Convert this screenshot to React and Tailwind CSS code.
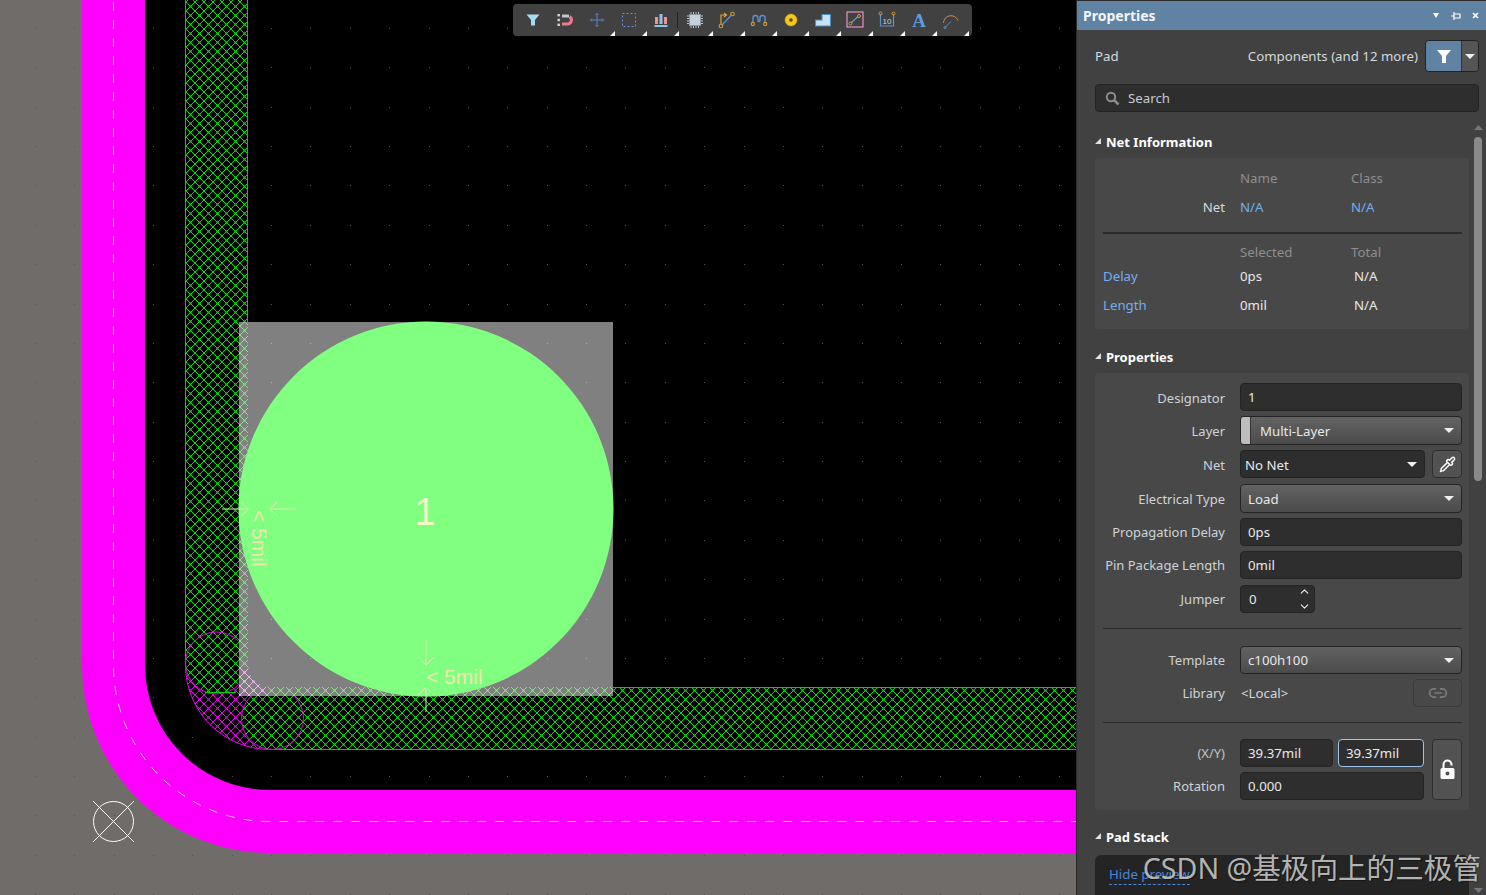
import React from "react";
import { Pipette, Link2, ChevronUp, ChevronDown } from "lucide-react";

const FONT = "font-['Noto_Sans','Open_Sans',sans-serif]";

function Canvas() {
  const dots = [];
  for (let i = -3; i < 24; i++) {
    for (let j = 0; j < 23; j++) {
      const x = Math.round(153 + i * 39.37);
      const y = Math.round(28 + j * 39.37);
      if (x > 0 && x < 1076) dots.push([x, y]);
    }
  }
  const hatch = (id, color, bg) => (
    <pattern id={id} width="9" height="9" patternUnits="userSpaceOnUse" x="186" y="2">
      {bg && <rect width="9" height="9" fill={bg} />}
      <path d="M0,0 L9,9 M9,0 L0,9" stroke={color} strokeWidth="1" fill="none" shapeRendering="crispEdges" />
      <rect x="3.5" y="3.5" width="2" height="2" fill={color} />
      <rect x="-1" y="-1" width="2" height="2" fill={color} />
      <rect x="8" y="-1" width="2" height="2" fill={color} />
      <rect x="-1" y="8" width="2" height="2" fill={color} />
      <rect x="8" y="8" width="2" height="2" fill={color} />
    </pattern>
  );
  const padBand = "M239,322 H248 V665 A22,22 0 0 0 270,687 H613 V696 H239 Z";
  return (
    <svg className="block" width="1076" height="895" viewBox="0 0 1076 895">
      <defs>
        {hatch("g", "#00e600", "#000")}
        {hatch("m", "#f000f0", "#000")}
        {hatch("pg", "#8fdc8f")}
        {hatch("pm", "#f0b4f0")}
      </defs>
      <rect width="1076" height="895" fill="#6f6c69" />
      <path d="M113.5,0 V665 A156.5,156.5 0 0 0 270,821.5 H1076 V0 Z" fill="#000" />
      {dots.map(([x, y], i) => (
        <rect key={i} x={x} y={y} width="1" height="1" fill="#555" />
      ))}
      <path d="M113.5,0 V665 A156.5,156.5 0 0 0 270,821.5 H1076" fill="none" stroke="#ff00ff" strokeWidth="63" />
      <path d="M113.5,2 V665 A156.5,156.5 0 0 0 270,821.5 H1076" fill="none" stroke="#ecc8ec" strokeWidth="1" strokeDasharray="9 9" />
      <circle cx="113.5" cy="821.5" r="20" fill="none" stroke="#fff" strokeWidth="1" />
      <path d="M93,801 L134,842 M134,801 L93,842" stroke="#fff" strokeWidth="1" />

      <path d="M185.5,660 V665 A84.5,84.5 0 0 0 270,749.5 H285 L285,687 H240 V660 Z" fill="url(#m)" stroke="none" />
      <path d="M185.5,665 A84.5,84.5 0 0 0 270,749.5" fill="none" stroke="#f000f0" strokeWidth="1" />
      <rect x="185.5" y="-2" width="62" height="665" fill="url(#g)" stroke="#00d000" strokeWidth="1" />
      <path d="M270,687.5 H1080 V749.5 H270 Z" fill="url(#g)" stroke="#00d000" strokeWidth="1" />
      <circle cx="216.5" cy="663" r="31" fill="url(#g)" stroke="#f000f0" strokeWidth="1" />
      <path d="M205,692.5 H236" fill="none" stroke="#00d000" strokeWidth="1" />
      <circle cx="272.5" cy="718.5" r="31" fill="url(#g)" stroke="#f000f0" strokeWidth="1" />

      <rect x="239" y="322" width="374" height="374" fill="#808080" />
      {dots
        .filter(([x, y]) => x > 248 && x < 613 && y > 322 && y < 687)
        .map(([x, y], i) => (
          <rect key={i} x={x} y={y} width="1" height="1" fill="#b0b0b0" />
        ))}
      <path d={padBand} fill="url(#pg)" />
      <path d="M239,668 H248 A22,22 0 0 0 266,687 V696 H239 Z" fill="url(#pm)" />
      <circle cx="426" cy="509" r="187.5" fill="#80ff80" />

      <g fill="none" stroke="#dcedb0" strokeWidth="1">
        <path d="M222,509 H248 M241,501.5 L248.5,509 L241,516.5" />
        <path d="M296,509 H270 M277.5,501.5 L270,509 L277.5,516.5" />
        <path d="M426,640 V665 M418,657 L426,665 L434,657" />
        <path d="M426,712 V687 M418,695 L426,687 L434,695" />
      </g>
      <text x="425" y="525" textAnchor="middle" fill="#f2f6c4" fontFamily="Liberation Sans" fontSize="38">1</text>
      <text x="426" y="684" fill="#efe6b0" fontFamily="Liberation Sans" fontSize="21">&lt; 5mil</text>
      <text transform="translate(252,510) rotate(90)" fill="#efe6b0" fontFamily="Liberation Sans" fontSize="21">&lt; 5mil</text>
    </svg>
  );
}

const ICONS = [
  <path key="a" d="M2.5,3.5 H15.5 L11,9 V14.5 H7 V9 Z" fill="#a6dcef" />,
  <g key="b">
    <path d="M6,13 H11.5 A4,4 0 0 0 13.5,5.6" fill="none" stroke="#e87b8a" strokeWidth="3" />
    <path d="M6,5 H13" fill="none" stroke="#b9c6d4" strokeWidth="3" />
    <rect x="1.5" y="3" width="2.4" height="2.4" fill="#cfd8e0" />
    <rect x="1.5" y="7.8" width="2.4" height="2.4" fill="#cfd8e0" />
    <rect x="1.5" y="12.6" width="2.4" height="2.4" fill="#cfd8e0" />
  </g>,
  <path key="c" d="M9,2.5 V15.5 M2.5,9 H15.5 M7.5,4 L9,2.5 L10.5,4 M7.5,14 L9,15.5 L10.5,14 M4,7.5 L2.5,9 L4,10.5 M14,7.5 L15.5,9 L14,10.5" fill="none" stroke="#5c86c8" strokeWidth="1" />,
  <rect key="d" x="2.5" y="2.5" width="13" height="13" fill="none" stroke="#6f90e0" strokeWidth="1" strokeDasharray="2 2" />,
  <g key="e">
    <rect x="3" y="6" width="3" height="7" fill="#ef8f98" />
    <rect x="7.5" y="3" width="3" height="10" fill="#8fc3e6" />
    <rect x="12" y="6" width="3" height="7" fill="#ef8f98" />
    <rect x="2.5" y="14" width="13" height="2" fill="#8fc3e6" />
  </g>,
  <g key="f">
    <rect x="3.5" y="3.5" width="11" height="11" fill="#c6d2da" stroke="#8b97a0" />
    <path d="M5,1 V3 M7.5,1 V3 M10,1 V3 M12.5,1 V3 M5,15 V17 M7.5,15 V17 M10,15 V17 M12.5,15 V17 M1,5 H3 M1,7.5 H3 M1,10 H3 M1,12.5 H3 M15,5 H17 M15,7.5 H17 M15,10 H17 M15,12.5 H17" stroke="#b6c2ca" strokeWidth="1" />
  </g>,
  <g key="g" fill="none">
    <path d="M3,13 V4 H8 M6,2 L8.5,4 L6,6" stroke="#e6a23c" strokeWidth="1.2" />
    <path d="M4,14 L13,4.5" stroke="#5f8fcc" strokeWidth="1.3" />
    <circle cx="3" cy="15" r="1.8" stroke="#d59a3a" strokeWidth="1.1" />
    <circle cx="14.5" cy="3" r="1.8" stroke="#d59a3a" strokeWidth="1.1" />
  </g>,
  <g key="h" fill="none">
    <path d="M3,11 V7 A2.5,2.5 0 0 1 8,7 V10 A1.3,1.3 0 0 0 10,10 V7 A2.5,2.5 0 0 1 15,7 V11" stroke="#5f8fcc" strokeWidth="1.4" />
    <circle cx="2.8" cy="13" r="1.6" stroke="#d59a3a" strokeWidth="1.1" />
    <circle cx="15.2" cy="13" r="1.6" stroke="#d59a3a" strokeWidth="1.1" />
  </g>,
  <g key="i">
    <circle cx="9" cy="9" r="6" fill="#f2c81e" stroke="#d9a514" strokeWidth="0.6" />
    <circle cx="9" cy="9" r="1.8" fill="#5a4a10" />
  </g>,
  <path key="j" d="M1.5,9 H8 V3.5 H16.5 V15 H1.5 Z" fill="#c6e2f3" stroke="#4d8cc4" strokeWidth="1.1" />,
  <g key="k" fill="none">
    <rect x="1" y="1" width="16" height="15" stroke="#f09ad8" strokeWidth="1.1" />
    <path d="M5,12 L12,5.5" stroke="#6f96cc" strokeWidth="1.2" />
    <circle cx="4.5" cy="12.5" r="1.5" stroke="#d59a3a" />
    <circle cx="13" cy="5" r="1.5" stroke="#d59a3a" />
  </g>,
  <g key="l" fill="none">
    <path d="M2.5,3 V15 H15.5 V3" stroke="#5f8fcc" strokeWidth="1.2" />
    <circle cx="2.5" cy="2.5" r="1.5" stroke="#d59a3a" />
    <circle cx="15.5" cy="2.5" r="1.5" stroke="#d59a3a" />
    <text x="9" y="13" textAnchor="middle" fill="#c8d0d8" fontSize="8" fontFamily="Liberation Sans">10</text>
  </g>,
  <text key="m" x="9" y="15.5" textAnchor="middle" fill="#5c9cdc" fontSize="19" fontWeight="bold" fontFamily="Liberation Serif">A</text>,
  <g key="n" fill="none">
    <path d="M1.5,12 A7.5,7.5 0 0 1 16,9.5" stroke="#d98a4a" strokeWidth="1" />
    <path d="M3.5,16 L9,10.5" stroke="#5f8fcc" strokeWidth="1" />
    <circle cx="3" cy="16.5" r="1" stroke="#5f8fcc" />
  </g>,
];

function ToolButton({ index }) {
  const hasMark = index >= 2;
  return (
    <div className="relative flex h-[32px] w-[32.1px] shrink-0 items-center justify-center">
      <svg width="18" height="18" viewBox="0 0 18 18" className="overflow-visible">{ICONS[index]}</svg>
      {hasMark && (
        <svg className="absolute bottom-0 right-[-2px]" width="5" height="5" viewBox="0 0 5 5">
          <path d="M5,0 V5 H0 Z" fill="#fff" />
        </svg>
      )}
    </div>
  );
}

function Toolbar() {
  return (
    <div className="absolute left-[513px] top-[4px] flex h-[32px] w-[459px] items-center rounded-[4px] bg-[#414141] pl-[4px]">
      {[0, 1, 2, 3, 4].map((i) => <ToolButton key={i} index={i} />)}
      <div className="h-[16px] w-px bg-[#222]" />
      {[5, 6, 7, 8, 9, 10, 11, 12, 13].map((i) => <ToolButton key={i} index={i} />)}
    </div>
  );
}

function Caret({ className = "" }) {
  return (
    <svg className={className} width="10" height="5" viewBox="0 0 10 5">
      <path d="M0,0 H10 L5,5 Z" fill="#f0f0f0" />
    </svg>
  );
}

function Heading({ children, className = "" }) {
  return (
    <div className={`flex h-[16px] items-center gap-[5px] ${className}`}>
      <svg className="relative -top-px" width="6" height="6" viewBox="0 0 6 6"><path d="M6,0 V6 H0 Z" fill="#e0e0e0" /></svg>
      <span className="text-[13px] font-bold leading-none text-white">{children}</span>
    </div>
  );
}

function Input({ children, h = "h-[28px]", pad = "pl-[7px]", edge = "border-[#232323]", className = "" }) {
  return (
    <div className={`flex ${h} items-center rounded-[4px] border ${edge} bg-[#2e2e2e] ${pad} text-[#e8e8e8] ${className}`}>
      {children}
    </div>
  );
}

function Select({ children, h = "h-[29px]", up = false }) {
  return (
    <div className={`flex ${h} items-center justify-between rounded-[4px] border border-[#232323] bg-linear-to-b from-[#636363] to-[#4b4b4b] pl-[7px] pr-[7px] text-[#e8e8e8]`}>
      <span className={up ? "relative top-px" : ""}>{children}</span>
      <Caret />
    </div>
  );
}

function Row({ label, children, className = "", low = false }) {
  return (
    <div className={`grid grid-cols-[122px_222px] gap-x-[15px] ${className}`}>
      <div className={`flex items-center justify-end whitespace-nowrap text-[13px] text-[#cfd3d6] ${low ? "pt-[2px]" : ""}`}>{label}</div>
      {children}
    </div>
  );
}

function Panel() {
  return (
    <aside className={`relative flex h-[895px] w-[410px] shrink-0 flex-col overflow-hidden border-l border-t border-[#2a2a2a] bg-[#414141] text-[13.25px] leading-[13px] ${FONT}`}>
      <header className="flex h-[29px] shrink-0 items-center justify-between bg-[#6082a3] pl-[6px] pr-[7px]">
        <span className="text-[14px] font-bold text-[#f2f5f8]">Properties</span>
        <div className="flex items-center gap-[11px]">
          <svg width="8" height="5" viewBox="0 0 8 5"><path d="M1,0 H7 L4,5 Z" fill="#fff" /></svg>
          <svg width="10" height="8" viewBox="0 0 10 8"><path d="M0,4 H3 M3,2 H9 V6 H3 Z M3,0 V8" stroke="#fff" strokeWidth="1.2" fill="none" /></svg>
          <svg width="7" height="7" viewBox="0 0 7 7"><path d="M1,1 L6,6 M6,1 L1,6" stroke="#fff" strokeWidth="1.6" /></svg>
        </div>
      </header>

      <div className="shrink-0 pl-[18px] pr-[7px]">
        <div className="mt-[10px] flex h-[32px] items-center">
          <span className="text-[#d5d9dc]">Pad</span>
          <span className="ml-auto mr-[7px] text-[#d5d9dc]">Components (and 12 more)</span>
          <div className="flex h-[32px] w-[54px] overflow-hidden rounded-[4px] border border-[#232323]">
            <div className="flex w-[35px] items-center justify-center bg-[#6082a3]">
              <svg width="16" height="16" viewBox="0 0 16 16"><path d="M1,2 H15 L10,8 V15 H6 V8 Z" fill="#fff" /></svg>
            </div>
            <div className="flex flex-1 items-center justify-center border-l border-[#333] bg-[#555]"><Caret /></div>
          </div>
        </div>
        <div className="mt-[12px] flex h-[28px] items-center rounded-[4px] border border-[#232323] bg-[#2e2e2e] pl-[9px]">
          <svg width="15" height="15" viewBox="0 0 15 15" fill="none" stroke="#8d8d8d">
            <circle cx="6" cy="6" r="4.2" strokeWidth="2" />
            <path d="M9.2,9.2 L13.5,13.5" strokeWidth="2.6" />
          </svg>
          <span className="ml-[8px] text-[#c6cbd0]">Search</span>
        </div>
      </div>

      <div className="flex min-h-0 flex-1">
        <div className="ml-[18px] w-[374px] shrink-0 pt-[22px]">
          <Heading>Net Information</Heading>
          <section className="mt-[8px] rounded-[4px] bg-[#484848] pb-[14px] pl-[8px] pr-[7px] pt-[10px]">
            <div className="grid h-[20px] grid-cols-[137px_111px_1fr] items-center text-[#8e8e8e]">
              <span /><span>Name</span><span>Class</span>
            </div>
            <div className="mt-[9px] grid h-[20px] grid-cols-[137px_111px_1fr] items-center text-[#72aef0]">
              <span className="pr-[15px] text-right text-[#d5d9dc]">Net</span><span>N/A</span><span>N/A</span>
            </div>
            <div className="mt-[15px] h-[2px] bg-[#2b2b2b]" />
            <div className="mt-[8px] grid h-[20px] grid-cols-[137px_111px_1fr] items-center text-[#8e8e8e]">
              <span /><span>Selected</span><span>Total</span>
            </div>
            <div className="mt-[4px] grid h-[20px] grid-cols-[137px_111px_1fr] items-center text-[#e8e8e8]">
              <span className="text-[#72aef0]">Delay</span><span>0ps</span><span className="pl-[3px]">N/A</span>
            </div>
            <div className="mt-[9px] grid h-[20px] grid-cols-[137px_111px_1fr] items-center text-[#e8e8e8]">
              <span className="text-[#72aef0]">Length</span><span>0mil</span><span className="pl-[3px]">N/A</span>
            </div>
          </section>

          <Heading className="mt-[20px]">Properties</Heading>
          <section className="mt-[8px] rounded-[4px] bg-[#484848] pb-[10px] pl-[8px] pr-[7px] pt-[10px]">
            <Row label="Designator" low><Input pad="pl-[7px]"><span>1</span></Input></Row>
            <Row label="Layer" className="mt-[5px]" low>
              <div className="flex h-[29px] items-stretch justify-between overflow-hidden rounded-[4px] border border-[#232323] bg-linear-to-b from-[#636363] to-[#4b4b4b] pr-[7px] text-[#e8e8e8]">
                <div className="w-[10px] border-r border-[#333] bg-[#bdbdbd]" />
                <span className="ml-[9px] flex items-center pt-[2px]">Multi-Layer</span>
                <div className="ml-auto flex items-center"><Caret /></div>
              </div>
            </Row>
            <Row label="Net" className="mt-[5px]" low>
              <div className="flex h-[28px] gap-[7px]">
                <Input pad="pl-[4px] pr-[7px]" className="flex-1 justify-between"><span className="relative top-px">No Net</span><Caret /></Input>
                <div className="flex w-[30px] items-center justify-center rounded-[4px] border border-[#2e2e2e] bg-[#525252]">
                  <Pipette size={17} className="text-white" />
                </div>
              </div>
            </Row>
            <Row label="Electrical Type" className="mt-[6px]" low><Select up>Load</Select></Row>
            <Row label="Propagation Delay" className="mt-[5px]"><Input>0ps</Input></Row>
            <Row label="Pin Package Length" className="mt-[5px]"><Input>0mil</Input></Row>
            <Row label="Jumper" className="mt-[6px]">
              <Input pad="pl-[8px] pr-[3px]" className="w-[75px] justify-between">
                <span>0</span>
                <div className="flex flex-col gap-[2px] text-[#f0f0f0]">
                  <ChevronUp size={13} strokeWidth={2} />
                  <ChevronDown size={13} strokeWidth={2} />
                </div>
              </Input>
            </Row>
            <div className="mt-[15px] h-px bg-[#2b2b2b]" />
            <Row label="Template" className="mt-[17px]"><Select h="h-[28px]">c100h100</Select></Row>
            <Row label="Library" className="mt-[5px]">
              <div className="flex h-[28px] items-center justify-between pl-[1px]">
                <span className="text-[#d5d9dc]">&lt;Local&gt;</span>
                <div className="flex h-[28px] w-[49px] items-center justify-center rounded-[4px] border border-[#3a3a3a]">
                  <Link2 size={20} className="text-[#7b7b7b]" />
                </div>
              </div>
            </Row>
            <div className="mt-[15px] h-px bg-[#2b2b2b]" />
            <div className="mt-[16px] flex gap-[8px]">
              <div className="flex flex-col gap-[5px]">
                <div className="grid grid-cols-[122px_184px] gap-x-[15px]">
                  <div className="flex items-center justify-end text-[13px] text-[#c0c4c8]">(X/Y)</div>
                  <div className="flex gap-[5px]">
                    <Input className="w-[93px]">39.37mil</Input>
                    <Input className="w-[86px]" edge="border-[#9cc4ea]">39.37mil</Input>
                  </div>
                </div>
                <div className="grid grid-cols-[122px_184px] gap-x-[15px]">
                  <div className="flex items-center justify-end text-[13px] text-[#cfd3d6]">Rotation</div>
                  <Input>0.000</Input>
                </div>
              </div>
              <div className="flex w-[30px] items-center justify-center rounded-[4px] border border-[#2e2e2e] bg-[#525252]">
                <svg width="15" height="21" viewBox="0 0 15 21">
                  <path d="M3.5,9 V5.5 A4,4 0 0 1 11.5,5.5 V6.5" fill="none" stroke="#fff" strokeWidth="2" />
                  <path fillRule="evenodd" d="M2,9 H13 A1.5,1.5 0 0 1 14.5,10.5 V18.5 A1.5,1.5 0 0 1 13,20 H2 A1.5,1.5 0 0 1 0.5,18.5 V10.5 A1.5,1.5 0 0 1 2,9 Z M7.5,12.5 A2,2 0 1 0 7.5,16.5 A2,2 0 1 0 7.5,12.5 Z" fill="#fff" />
                </svg>
              </div>
            </div>
          </section>

          <Heading className="mt-[19px]">Pad Stack</Heading>
          <section className="mt-[10px] h-[60px] rounded-t-[6px] bg-[#242424] pl-[14px] pt-[13px]">
            <span className="border-b border-dashed border-[#4a86d8] pb-[1px] text-[#4a86d8]">Hide preview</span>
          </section>
        </div>

        <div className="ml-[5px] flex w-[8px] shrink-0 flex-col items-center pt-[13px]">
          <svg width="9" height="5" viewBox="0 0 9 5"><path d="M4.5,0 L9,5 H0 Z" fill="#777" /></svg>
          <div className="mt-[7px] h-[344px] w-[8px] shrink-0 rounded-[4px] bg-[#8a8a8a]" />
          <svg className="mb-[2px] mt-auto" width="9" height="5" viewBox="0 0 9 5"><path d="M0,0 H9 L4.5,5 Z" fill="#777" /></svg>
        </div>
      </div>

      <div className="absolute right-[5px] top-[850px] whitespace-nowrap font-['Noto_Sans','Noto_Sans_CJK_SC',sans-serif] text-[28.6px] leading-[34px] text-[#c8c8c8]/90 [text-shadow:1px_1px_1px_rgba(0,0,0,0.4)]">
        CSDN @基极向上的三极管
      </div>
    </aside>
  );
}

export default function App() {
  return (
    <div className="flex h-[895px] w-[1486px] overflow-hidden bg-black">
      <main className="relative w-[1076px] shrink-0">
        <Canvas />
        <Toolbar />
      </main>
      <Panel />
    </div>
  );
}
